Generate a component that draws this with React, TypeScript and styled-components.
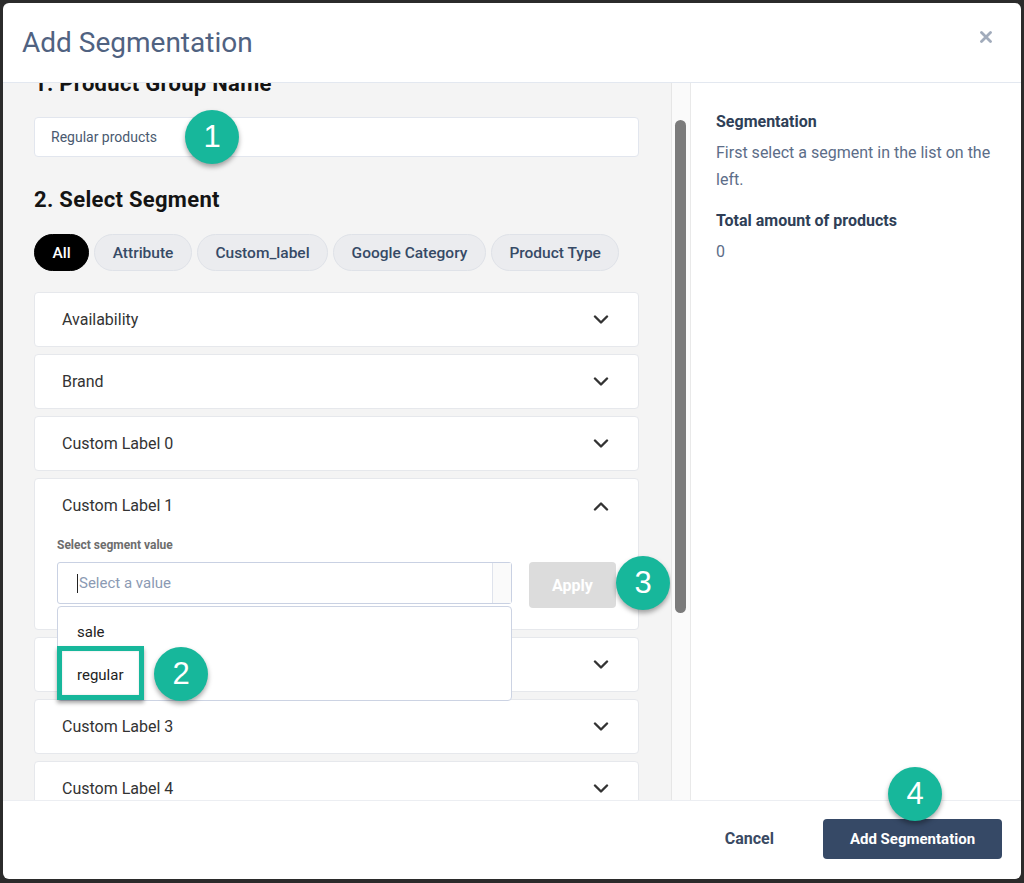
import { useLayoutEffect, useRef } from "react";
import styled, { createGlobalStyle } from "styled-components";

const GlobalStyle = createGlobalStyle`
  * { box-sizing: border-box; }
  html, body { margin: 0; padding: 0; }
  body {
    background: #2b2b2b;
    font-family: Roboto, "Liberation Sans", Arial, sans-serif;
  }
`;

const TEAL = "#17b79b";

const Backdrop = styled.div`
  width: 1024px;
  height: 883px;
  padding: 3px;
`;

const Modal = styled.div`
  width: 1018px;
  height: 876px;
  background: #fff;
  border-radius: 6px;
  display: flex;
  flex-direction: column;
  overflow: hidden;
`;

const Header = styled.div`
  height: 80px;
  flex-shrink: 0;
  display: flex;
  align-items: center;
  justify-content: space-between;
  padding: 0 29px 0 19px;
  border-bottom: 1px solid #e3e8f0;
`;

const Title = styled.h1`
  margin: 0;
  font-size: 28px;
  font-weight: 400;
  color: #506281;
`;

const CloseButton = styled.button`
  border: 0;
  background: none;
  padding: 0;
  display: flex;
  margin-top: -12px;
  cursor: pointer;
`;

const Body = styled.div`
  flex: 1;
  min-height: 0;
  display: flex;
`;

const LeftPane = styled.div`
  width: 668px;
  flex-shrink: 0;
  background: #f4f4f4;
  overflow-y: scroll;
  scrollbar-width: none;
  padding: 32px 32px 56px 31px;

  &::-webkit-scrollbar {
    display: none;
  }
`;

/* drawn scrollbar: the headless browser hides native ones */
const ScrollTrack = styled.div`
  width: 19px;
  flex-shrink: 0;
  background: #fafafa;
  border-left: 1px solid #e6e6e6;
`;

const ScrollThumb = styled.div`
  margin: 37px 0 0 3px;
  width: 11px;
  height: 493px;
  border-radius: 6px;
  background: #7b7b7b;
`;

const SectionTitle = styled.h2<{ $gap?: number }>`
  margin: ${(p) => p.$gap ?? 0}px 0 0;
  font-size: 22px;
  line-height: 28px;
  font-weight: 700;
  color: #141414;
  letter-spacing: 0.3px;
`;

const NameField = styled.div`
  position: relative;
  margin-top: 19px;
  height: 40px;
  background: #fff;
  border: 1px solid #e2e6ee;
  border-radius: 4px;
  display: flex;
  align-items: center;
  padding: 0 16px;
  font-size: 14px;
  color: #4a5a70;
`;

const Badge = styled.div<{ $top: number; $left: number }>`
  position: absolute;
  top: ${(p) => p.$top}px;
  left: ${(p) => p.$left}px;
  z-index: 5;
  width: 54px;
  height: 54px;
  border-radius: 50%;
  background: ${TEAL};
  box-shadow: 0 3px 5px rgba(0, 0, 0, 0.35);
  color: #fff;
  font-family: "Liberation Sans", Arial, sans-serif;
  font-size: 31px;
  display: flex;
  align-items: center;
  justify-content: center;
`;

const TabRow = styled.div`
  margin-top: 20px;
  display: flex;
  gap: 5px;
`;

const Tab = styled.button<{ $active?: boolean }>`
  height: 37px;
  padding: 0 17.5px;
  border-radius: 19px;
  border: 1px solid ${(p) => (p.$active ? "#000" : "#dfe2e8")};
  background: ${(p) => (p.$active ? "#000" : "#ebecef")};
  color: ${(p) => (p.$active ? "#fff" : "#364a66")};
  font-family: Roboto, sans-serif;
  font-size: 15.5px;
  font-weight: 500;
  cursor: pointer;
`;

const AccordionList = styled.div`
  margin-top: 21px;
  display: flex;
  flex-direction: column;
  gap: 7px;
`;

const Item = styled.div<{ $open?: boolean }>`
  position: relative;
  z-index: ${(p) => (p.$open ? 2 : 1)};
  background: #fff;
  border: 1px solid #e6e8ec;
  border-radius: 4px;
`;

const ItemHeader = styled.div`
  height: 53px;
  display: flex;
  align-items: center;
  justify-content: space-between;
  padding: 0 29px 0 27px;
  font-size: 16px;
  color: #333;
`;

const ItemBody = styled.div`
  padding: 5px 22px 21px;
`;

const FieldLabel = styled.div`
  font-size: 12px;
  line-height: 16px;
  font-weight: 700;
  color: #6d6d6d;
  margin-bottom: 9px;
`;

const SelectRow = styled.div`
  position: relative;
  display: flex;
  align-items: flex-start;
  gap: 17px;
`;

const SelectWrap = styled.div`
  position: relative;
  width: 455px;
`;

const SelectBox = styled.div`
  height: 42px;
  border: 1px solid #c9d1e3;
  border-radius: 3px;
  display: flex;
  align-items: stretch;
  background: #fff;
`;

const SelectValue = styled.div`
  flex: 1;
  display: flex;
  align-items: center;
  padding-left: 19px;
  font-size: 15px;
  color: #8b9ab3;
`;

const Caret = styled.span`
  width: 1px;
  height: 19px;
  background: #222;
  margin-right: 1px;
`;

const Indicator = styled.div`
  width: 19px;
  border-left: 1px solid #dfe3ec;
  background: #fafafa;
`;

const ApplyButton = styled.button`
  width: 87px;
  height: 46px;
  border: 0;
  border-radius: 4px;
  background: #dcdcdc;
  color: #fff;
  font-family: Roboto, sans-serif;
  font-size: 16px;
  font-weight: 700;
`;

const Menu = styled.div`
  position: absolute;
  top: calc(100% + 2px);
  left: 0;
  width: 455px;
  background: #fff;
  border: 1px solid #ccd3e3;
  border-radius: 4px;
  padding: 3px 0 4px;
`;

const Option = styled.div`
  height: 43px;
  display: flex;
  align-items: center;
  padding-left: 19px;
  font-size: 15px;
  color: #222;
`;

const Highlight = styled.div`
  position: absolute;
  left: -1px;
  top: 39px;
  width: 87px;
  height: 54px;
  border: 5px solid ${TEAL};
  box-shadow: 0 3px 4px rgba(0, 0, 0, 0.35), inset 0 0 2px rgba(0, 0, 0, 0.15);
`;

const RightPane = styled.div`
  flex: 1;
  border-left: 1px solid #e9e9e9;
  padding: 28px 25px;
`;

const InfoTitle = styled.div<{ $gap?: number }>`
  margin-top: ${(p) => p.$gap ?? 0}px;
  font-size: 16px;
  line-height: 22px;
  font-weight: 700;
  color: #2f3f57;
`;

const InfoText = styled.div`
  margin-top: 6px;
  font-size: 16px;
  line-height: 27px;
  color: #5c6d88;
`;

const Footer = styled.div`
  position: relative;
  height: 79px;
  flex-shrink: 0;
  border-top: 1px solid #eceef2;
  display: flex;
  align-items: center;
  justify-content: flex-end;
  gap: 29px;
  padding: 0 19px 3px 0;
`;

const CancelButton = styled.button`
  border: 0;
  background: none;
  padding: 0 20px;
  height: 40px;
  font-family: Roboto, sans-serif;
  font-size: 16px;
  font-weight: 700;
  color: #3a4a63;
  cursor: pointer;
`;

const PrimaryButton = styled.button`
  width: 179px;
  height: 40px;
  border: 0;
  border-radius: 4px;
  background: #364966;
  color: #fff;
  font-family: Roboto, sans-serif;
  font-size: 15px;
  font-weight: 700;
  cursor: pointer;
`;

const Chevron = ({ up }: { up?: boolean }) => (
  <svg width="16" height="10" viewBox="0 0 16 10" fill="none">
    <path
      d={up ? "M2 8.5 L8 2.5 L14 8.5" : "M2 1.5 L8 7.5 L14 1.5"}
      stroke="#333"
      strokeWidth="2.4"
      strokeLinecap="round"
      strokeLinejoin="round"
    />
  </svg>
);

const tabs = ["All", "Attribute", "Custom_label", "Google Category", "Product Type"];
const before = ["Availability", "Brand", "Custom Label 0"];
const after = ["Custom Label 2", "Custom Label 3", "Custom Label 4", "Condition", "Gender"];

const App = () => {
  const paneRef = useRef<HTMLDivElement>(null);

  useLayoutEffect(() => {
    if (paneRef.current) paneRef.current.scrollTop = 45;
  }, []);

  return (
    <Backdrop>
      <GlobalStyle />
      <Modal>
        <Header>
          <Title>Add Segmentation</Title>
          <CloseButton aria-label="Close">
            <svg width="12" height="12" viewBox="0 0 12 12">
              <path d="M1.5 1.5 L10.5 10.5 M10.5 1.5 L1.5 10.5" stroke="#a1abbb" strokeWidth="2.8" strokeLinecap="round" />
            </svg>
          </CloseButton>
        </Header>

        <Body>
          <LeftPane ref={paneRef}>
            <SectionTitle>1. Product Group Name</SectionTitle>
            <NameField>
              Regular products
              <Badge $top={-8} $left={150}>1</Badge>
            </NameField>

            <SectionTitle $gap={29}>2. Select Segment</SectionTitle>
            <TabRow>
              {tabs.map((t, i) => (
                <Tab key={t} $active={i === 0}>
                  {t}
                </Tab>
              ))}
            </TabRow>

            <AccordionList>
              {before.map((name) => (
                <Item key={name}>
                  <ItemHeader>
                    {name}
                    <Chevron />
                  </ItemHeader>
                </Item>
              ))}

              <Item $open>
                <ItemHeader>
                  Custom Label 1
                  <Chevron up />
                </ItemHeader>
                <ItemBody>
                  <FieldLabel>Select segment value</FieldLabel>
                  <SelectRow>
                    <SelectWrap>
                      <SelectBox>
                        <SelectValue>
                          <Caret />
                          Select a value
                        </SelectValue>
                        <Indicator />
                      </SelectBox>
                      <Menu>
                        <Option>sale</Option>
                        <Option>regular</Option>
                        <Highlight />
                        <Badge $top={40} $left={96}>2</Badge>
                      </Menu>
                    </SelectWrap>
                    <ApplyButton disabled>Apply</ApplyButton>
                    <Badge $top={-6} $left={559}>3</Badge>
                  </SelectRow>
                </ItemBody>
              </Item>

              {after.map((name) => (
                <Item key={name}>
                  <ItemHeader>
                    {name}
                    <Chevron />
                  </ItemHeader>
                </Item>
              ))}
            </AccordionList>
          </LeftPane>

          <ScrollTrack>
            <ScrollThumb />
          </ScrollTrack>

          <RightPane>
            <InfoTitle>Segmentation</InfoTitle>
            <InfoText>First select a segment in the list on the left.</InfoText>
            <InfoTitle $gap={17}>Total amount of products</InfoTitle>
            <InfoText>0</InfoText>
          </RightPane>
        </Body>

        <Footer>
          <CancelButton>Cancel</CancelButton>
          <PrimaryButton>Add Segmentation</PrimaryButton>
          <Badge $top={-34} $left={885}>4</Badge>
        </Footer>
      </Modal>
    </Backdrop>
  );
};

export default App;
